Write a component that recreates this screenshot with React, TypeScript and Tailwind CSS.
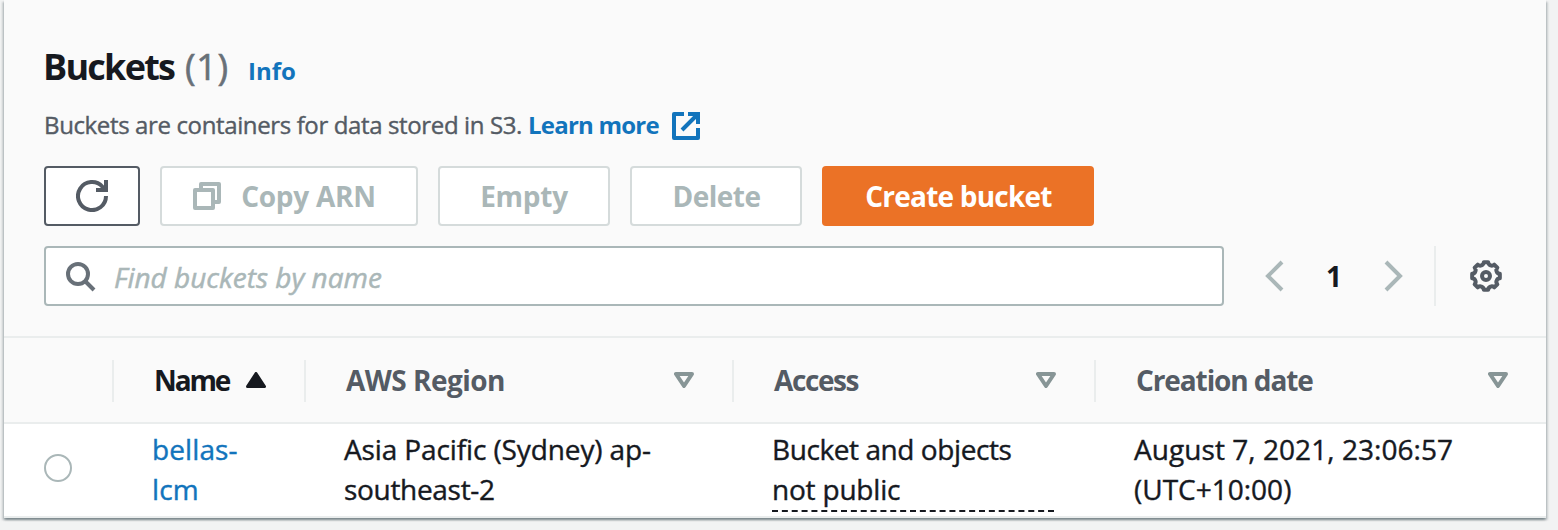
import React from 'react';

const GEAR = Array.from({ length: 8 }, (_, i) => {
  const point = (deg: number, r: number) => {
    const a = ((i * 45 + deg) * Math.PI) / 180;
    return `${(16 + r * Math.sin(a)).toFixed(2)} ${(16 - r * Math.cos(a)).toFixed(2)}`;
  };
  return `${i ? 'L' : 'M'}${point(-9, 14)}L${point(9, 14)}Q${point(12, 11.6)} ${point(22.5, 11.6)}Q${point(33, 11.6)} ${point(36, 14)}`;
}).join('') + 'Z';

function SortIcon({ active = false }: { active?: boolean }) {
  return active ? (
    <svg className="mb-[2px] block h-4 w-5" viewBox="0 0 20 16">
      <path d="M10 1.5 18.5 14.5H1.5Z" fill="#16191f" stroke="#16191f" strokeWidth="3" strokeLinejoin="round" />
    </svg>
  ) : (
    <svg className="mb-[2px] block h-4 w-5" viewBox="0 0 20 16">
      <path d="M2 2H18L10 14Z" fill="none" stroke="#879596" strokeWidth="4" strokeLinejoin="round" />
    </svg>
  );
}

function HeaderCell({ children, last = false }: { children?: React.ReactNode; last?: boolean }) {
  return (
    <div
      className={`flex h-[42px] items-center border-r-2 pl-10 text-[28px] leading-[40px] font-bold text-[#545b64] ${last ? 'border-transparent' : 'border-[#eaeded]'}`}
    >
      {children}
    </div>
  );
}

const disabledButton =
  'flex h-[60px] items-center justify-center rounded-[4px] border-2 border-[#d5dbdb] bg-white text-[28px] leading-[40px] font-bold text-[#aab7b8]';

export default function App() {
  return (
    <div className="h-[530px] overflow-hidden bg-[#f2f3f3] pr-3 pl-1 font-['Open_Sans','Noto_Sans',sans-serif] text-[#16191f]">
      <section className="flex h-[518px] flex-col bg-white shadow-[0_2px_2px_0_rgba(0,28,36,0.3),2px_2px_2px_0_rgba(0,28,36,0.15),-2px_2px_2px_0_rgba(0,28,36,0.15)]">
        <header className="h-[338px] border-b-2 border-[#eaeded] bg-[#fafafa] px-10 pt-[43px] whitespace-nowrap">
          <div className="flex h-[48px] items-baseline leading-[48px]">
            <h2 className="-ml-px w-[141px] text-[36px] font-bold tracking-[-1.76px]">Buckets</h2>
            <span className="w-[64px] pl-px text-[36px] tracking-[0.6px] text-[#687078] [-webkit-text-stroke:0.6px_currentColor]">(1)</span>
            <a className="text-[24px] font-bold text-[#1274bc]">Info</a>
          </div>
          <p className="mt-[14px] flex h-[40px] items-center text-[24px] text-[#545b64]">
            <span className="w-[484px] tracking-[-0.37px] [-webkit-text-stroke:0.4px_currentColor]">Buckets are containers for data stored in S3.</span>
            <a className="w-[144px] font-bold tracking-[-0.78px] text-[#1274bc]">Learn more</a>
            <svg className="mt-px h-7 w-7" viewBox="0 0 28 28" fill="none" stroke="#1274bc" strokeWidth="4">
              <path d="M12 2H2V26H26V16" strokeLinejoin="round" />
              <path d="M16 2H26V12M26 2 10 18" />
            </svg>
          </p>
          <div className="mt-[21px] flex gap-5">
            <button className="flex h-[60px] w-[96px] items-center justify-center rounded-[4px] border-2 border-[#545b64] bg-white">
              <svg className="h-8 w-8" viewBox="0 0 32 32" fill="none" stroke="#545b64" strokeWidth="4">
                <path d="M30 16A14 14 0 1 1 26.5 6.8L29.5 10" />
                <path d="M30 0V10H20" />
              </svg>
            </button>
            <button className={`${disabledButton} w-[258px] pr-[9px]`}>
              <svg className="mr-[20px] h-7 w-7" viewBox="0 0 28 28" fill="none" stroke="#aab7b8" strokeWidth="4" strokeLinejoin="round">
                <path d="M2 8H20V26H2Z" />
                <path d="M8 7V2H26V20H21" />
              </svg>
              <span className="tracking-[-0.27px]">Copy ARN</span>
            </button>
            <button className={`${disabledButton} w-[172px] tracking-[-0.26px]`}>Empty</button>
            <button className={`${disabledButton} w-[172px] pl-px tracking-[-0.5px]`}>Delete</button>
            <button className="flex h-[60px] w-[272px] items-center justify-center rounded-[4px] bg-[#eb7226] pl-px text-[28px] leading-[40px] font-bold tracking-[-0.78px] text-white">
              Create bucket
            </button>
          </div>
          <div className="mt-5 flex h-[60px] items-center">
            <div className="flex h-[60px] w-[1180px] items-center rounded-[4px] border-2 border-[#aab7b8] bg-white pl-5">
              <svg className="mt-px h-[30px] w-[30px]" viewBox="0 0 30 30" fill="none" stroke="#687078" strokeWidth="4">
                <circle cx="12" cy="12" r="10" />
                <path d="M19 19 28 28" />
              </svg>
              <span className="pt-[2px] pl-[18px] text-[28px] leading-[40px] text-[#aab7b8] italic [-webkit-text-stroke:0.5px_currentColor]">Find buckets by name</span>
            </div>
            <svg className="ml-[41px] h-8 w-5" viewBox="0 0 20 32" fill="none" stroke="#aab7b8" strokeWidth="4">
              <path d="M17 2 3 16 17 30" />
            </svg>
            <span className="ml-[41px] w-[57px] text-[28px] leading-[40px] font-bold">1</span>
            <svg className="h-8 w-5" viewBox="0 0 20 32" fill="none" stroke="#aab7b8" strokeWidth="4">
              <path d="M3 2 17 16 3 30" />
            </svg>
            <span className="ml-[31px] h-[60px] w-[2px] bg-[#eaeded]" />
            <svg className="ml-[34px] h-8 w-8" viewBox="0 0 32 32" fill="none" stroke="#545b64" strokeWidth="4" strokeLinejoin="round">
              <path d={GEAR} />
              <circle cx="16" cy="16" r="4" strokeWidth="4" />
            </svg>
          </div>
        </header>

        <div className="grid h-[86px] grid-cols-[110px_192px_428px_362px_450px] border-b-2 border-[#eaeded] bg-[#fafafa] pt-[22px] whitespace-nowrap">
          <HeaderCell />
          <HeaderCell>
            <span className="w-[92px] pb-[3px] tracking-[-2.1px] text-[#16191f]">Name</span>
            <SortIcon active />
          </HeaderCell>
          <HeaderCell>
            <span className="w-[328px] pb-[3px] tracking-[-0.53px]">AWS Region</span>
            <SortIcon />
          </HeaderCell>
          <HeaderCell>
            <span className="w-[262px] pb-[3px] tracking-[-1.4px]">Access</span>
            <SortIcon />
          </HeaderCell>
          <HeaderCell last>
            <span className="w-[352px] pb-[3px] tracking-[-1.1px]">Creation date</span>
            <SortIcon />
          </HeaderCell>
        </div>

        <div className="grid h-[94px] grid-cols-[110px_192px_428px_362px_450px] border-b-2 border-[#eaeded] pt-[5px] text-[28px] leading-[40px] whitespace-nowrap [-webkit-text-stroke:0.4px_currentColor]">
          <div className="pt-[25px] pl-10">
            <div className="h-7 w-7 rounded-full border-2 border-[#aab7b8] bg-white" />
          </div>
          <a className="pl-[38px] tracking-[0.1px] text-[#1274bc]">
            bellas-
            <br />
            lcm
          </a>
          <div className="pl-[38px]">
            <span className="tracking-[-0.12px]">Asia Pacific (Sydney) ap-</span>
            <br />
            <span className="tracking-[-0.31px]">southeast-2</span>
          </div>
          <div className="pl-[38px]">
            <div className="h-[81px]">
              <span className="tracking-[-0.42px]">Bucket and objects</span>
              <br />
              <span className="tracking-[-0.2px]">not public</span>
            </div>
            <svg className="block h-[2px] w-[282px]" viewBox="0 0 282 2">
              <path d="M0 1H282" stroke="#16191f" strokeWidth="2" strokeDasharray="6 3.857" />
            </svg>
          </div>
          <div className="pl-[38px]">
            <span className="tracking-[0.06px]">August 7, 2021, 23:06:57</span>
            <br />
            (UTC+10:00)
          </div>
        </div>
      </section>
    </div>
  );
}
